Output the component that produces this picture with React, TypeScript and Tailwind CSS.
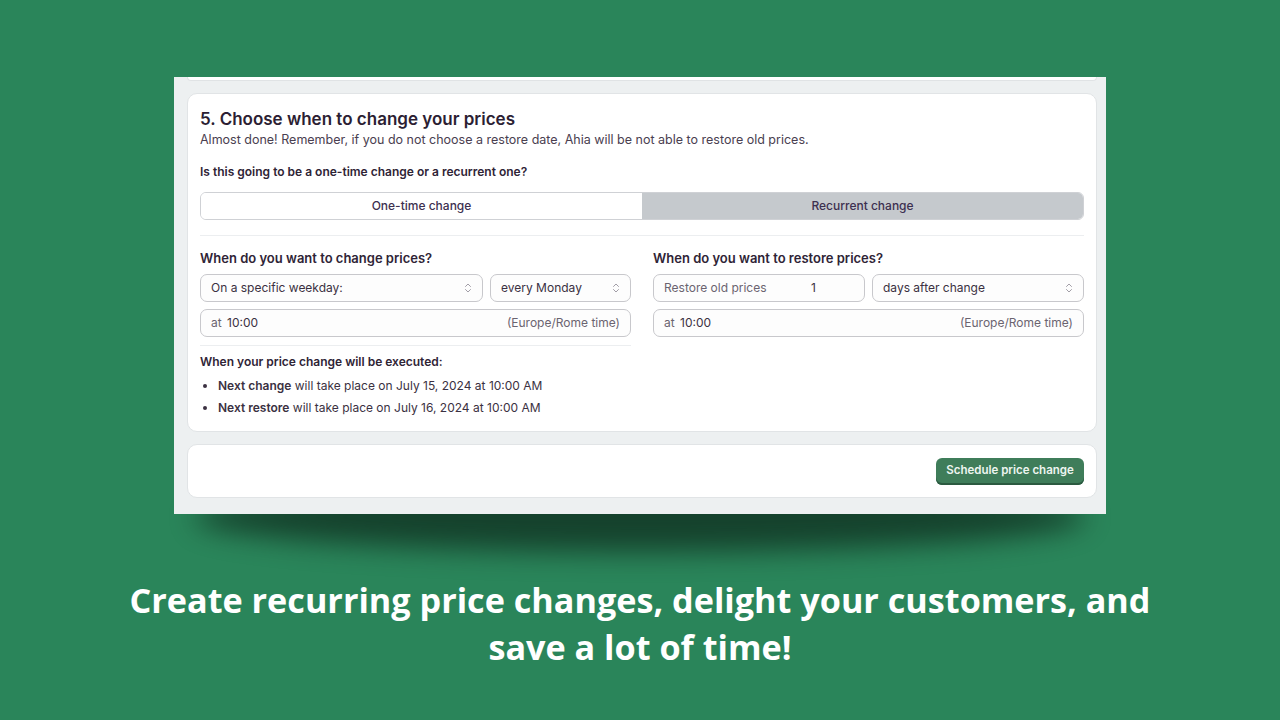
import { ChevronsUpDown } from "lucide-react";

const ui = { fontFamily: "Inter, 'Noto Sans', sans-serif" };

function SelectBox({ label, className }: { label: string; className: string }) {
  return (
    <div
      className={
        "h-[28px] rounded-[7px] border border-[#c8c8cc] bg-[#fdfdfd] flex items-center justify-between pl-[10px] pr-[8px] text-[12px] text-[#3b3142] " +
        className
      }
    >
      <span>{label}</span>
      <ChevronsUpDown size={12} strokeWidth={1.6} className="text-[#8a8590]" />
    </div>
  );
}

function TimeBox() {
  return (
    <div className="h-[28px] rounded-[7px] border border-[#c8c8cc] bg-[#fdfdfd] flex items-center justify-between px-[10px] text-[12px]">
      <span className="text-[#6b6470]">
        at <span className="text-[#3b3142] ml-[2px]">10:00</span>
      </span>
      <span className="text-[#6b6470]">(Europe/Rome time)</span>
    </div>
  );
}

export default function App() {
  return (
    <div className="w-full h-[720px] bg-[#2a855a] flex flex-col items-center overflow-hidden">
      <div className="relative mt-[77px] w-[932px]">
        {/* soft shadow under the window */}
        <div className="absolute left-[20px] right-[20px] bottom-[-38px] h-[70px] rounded-[50%] bg-[#133b28] blur-[14px] opacity-90"></div>

        <div
          className="relative bg-[#edf0f1] pl-[13px] pr-[9px] pb-[16px] flex flex-col gap-[12px]"
          style={ui}
        >
          <div className="h-[4px] bg-white border border-t-0 border-[#e0e3e5] rounded-b-[10px]"></div>

          <div className="bg-white border border-[#e1e4e6] rounded-[10px] pl-[12px] pr-[12px] pt-[13px] pb-[12px]">
            <h2 className="text-[17px] leading-[24px] font-semibold text-[#2c1e33]">
              5. Choose when to change your prices
            </h2>
            <p className="text-[12.5px] leading-[18px] text-[#4a4050]">
              Almost done! Remember, if you do not choose a restore date, Ahia will be not able to restore old prices.
            </p>

            <p className="mt-[14px] text-[12px] leading-[18px] font-semibold text-[#2f2436]">
              Is this going to be a one-time change or a recurrent one?
            </p>

            <div className="mt-[11px] h-[28px] flex rounded-[6px] border border-[#cfd1d5] overflow-hidden text-[12px] font-medium text-[#3d3050]">
              <div className="flex-1 bg-white flex items-center justify-center">One-time change</div>
              <div className="flex-1 bg-[#c5c9cd] flex items-center justify-center">Recurrent change</div>
            </div>

            <div className="mt-[15px] h-px bg-[#eceef0]"></div>

            <div className="mt-[13px] grid grid-cols-2 gap-[22px]">
              <div>
                <p className="text-[13px] leading-[18px] font-semibold text-[#2f2436]">
                  When do you want to change prices?
                </p>
                <div className="mt-[7px] flex gap-[7px]">
                  <SelectBox label="On a specific weekday:" className="flex-1" />
                  <SelectBox label="every Monday" className="w-[141px]" />
                </div>
                <div className="mt-[7px]">
                  <TimeBox />
                </div>
                <div className="mt-[8px] h-px bg-[#eceef0]"></div>
                <p className="mt-[8px] text-[12px] leading-[16px] font-semibold text-[#2f2436]">
                  When your price change will be executed:
                </p>
                <ul className="mt-[5px] list-disc pl-[18px] text-[12px] leading-[22px] text-[#3b3142] marker:text-[#3b3142]">
                  <li>
                    <span className="font-semibold">Next change</span> will take place on July 15, 2024 at 10:00 AM
                  </li>
                  <li>
                    <span className="font-semibold">Next restore</span> will take place on July 16, 2024 at 10:00 AM
                  </li>
                </ul>
              </div>

              <div>
                <p className="text-[13px] leading-[18px] font-semibold text-[#2f2436]">
                  When do you want to restore prices?
                </p>
                <div className="mt-[7px] flex gap-[7px]">
                  <div className="w-[212px] h-[28px] rounded-[7px] border border-[#c8c8cc] bg-[#fdfdfd] flex items-center pl-[10px] text-[12px]">
                    <span className="text-[#6b6470] w-[147px]">Restore old prices</span>
                    <span className="text-[#3b3142]">1</span>
                  </div>
                  <SelectBox label="days after change" className="flex-1" />
                </div>
                <div className="mt-[7px]">
                  <TimeBox />
                </div>
              </div>
            </div>
          </div>

          <div className="bg-white border border-[#e1e4e6] rounded-[10px] h-[54px] flex items-center justify-end pr-[12px]">
            <button className="w-[148px] h-[27px] rounded-[6px] bg-[#3f7d5a] shadow-[inset_0_-2px_0_#2b5a40] flex items-center justify-center text-[11.5px] font-semibold text-[#eef5f0]">
              Schedule price change
            </button>
          </div>
        </div>
      </div>

      <div
        className="mt-[62px] text-center text-white font-bold text-[34.2px] leading-[47px] w-[1100px]"
        style={{ fontFamily: "'Open Sans', sans-serif" }}
      >
        Create recurring price changes, delight your customers, and
        <br />
        save a lot of time!
      </div>
    </div>
  );
}
